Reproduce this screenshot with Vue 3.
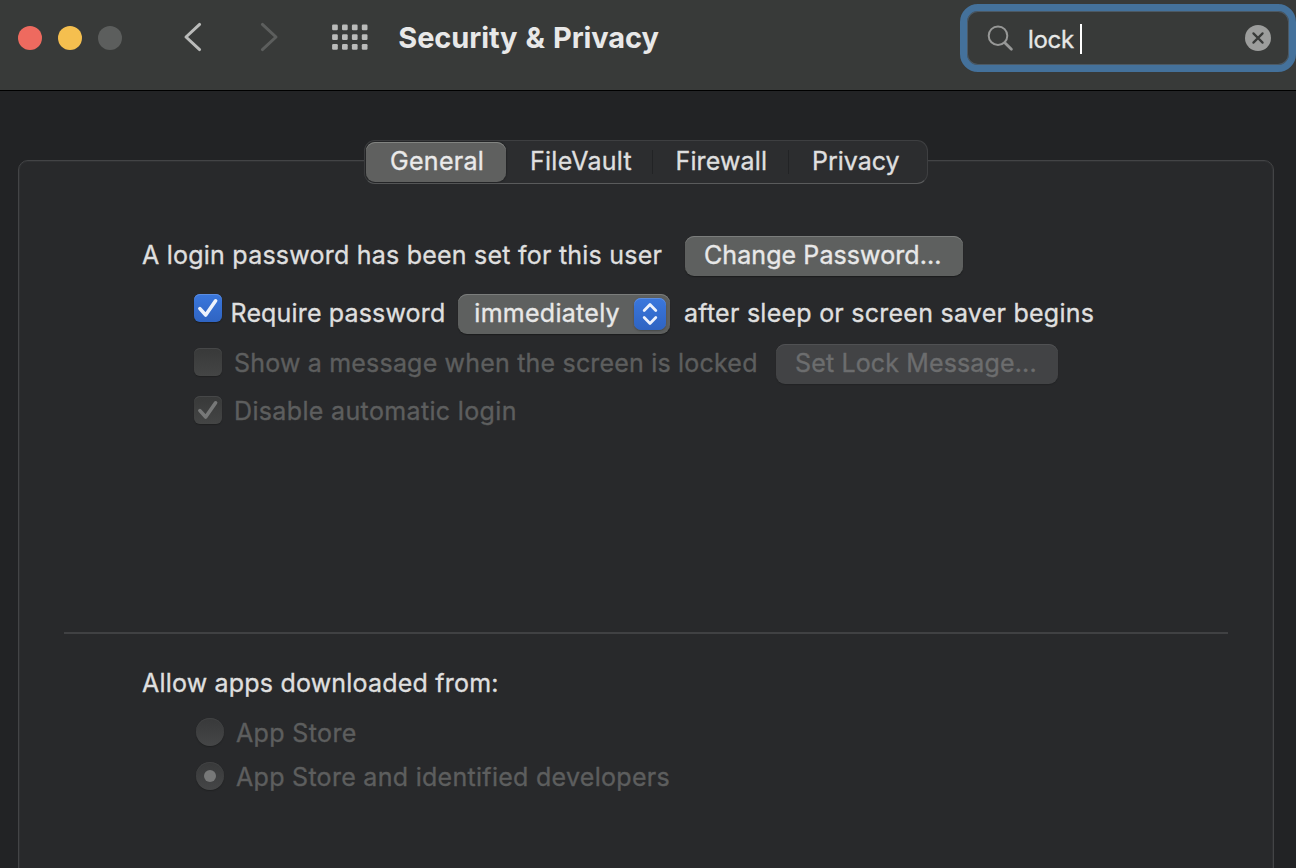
<script setup>
import { ref } from 'vue'

const query = ref('lock')
const dots = [0, 1, 2].flatMap(r => [0, 1, 2, 3].map(c => ({ x: c * 9.9, y: r * 9.8 })))
</script>

<template>
  <div class="window">
    <header class="toolbar">
      <div class="lights">
        <span class="light close"></span>
        <span class="light minimize"></span>
        <span class="light zoom"></span>
      </div>
      <svg class="nav back" width="20" height="32" viewBox="0 0 20 32">
        <path d="M16.600 3.400 3 16l13.600 12.600" />
      </svg>
      <svg class="nav forward" width="20" height="32" viewBox="0 0 20 32">
        <path d="M3.400 3.400 17 16 3.400 28.600" />
      </svg>
      <svg class="grid" width="36" height="26" viewBox="0 0 36 26">
        <rect v-for="(d, i) in dots" :key="i" :x="d.x + 0.1" :y="d.y + 0.5" width="5.700" height="5.700" rx="1.200" />
      </svg>
      <h1 class="title">Security &amp; Privacy</h1>
      <div class="search">
        <svg class="glass" width="28" height="28" viewBox="0 0 28 28">
          <circle cx="12" cy="11.700" r="9.300" />
          <path d="M18.800 18.700 25.400 25.300" />
        </svg>
        <span class="query">{{ query }}</span>
        <span class="caret"></span>
        <svg class="clear" width="26" height="26" viewBox="0 0 26 26">
          <circle cx="13" cy="13" r="13" />
          <path d="M8.400 8.400l9.200 9.200M17.600 8.400l-9.200 9.200" />
        </svg>
      </div>
    </header>

    <main class="content">
      <nav class="tabs">
        <span class="tab general active">General</span>
        <span class="tab filevault">FileVault</span>
        <i class="sep"></i>
        <span class="tab firewall">Firewall</span>
        <i class="sep"></i>
        <span class="tab privacy">Privacy</span>
      </nav>

      <section class="panel">
        <div class="row login">
          <span class="text t-login">A login password has been set for this user</span>
          <button class="button change">Change Password...</button>
        </div>
        <div class="row require">
          <span class="check on">
            <svg width="28" height="28" viewBox="0 0 28 28"><path d="M5.900 14.600 11.700 21 21.600 6.800" /></svg>
          </span>
          <span class="text t-require">Require password</span>
          <span class="select">
            <span class="value">immediately</span>
            <span class="stepper">
              <svg width="32" height="32" viewBox="0 0 32 32">
                <path d="M10.200 12.400 16 6.600l5.800 5.800M10.200 19.600 16 25.400l5.800-5.800" />
              </svg>
            </span>
          </span>
          <span class="text t-after">after sleep or screen saver begins</span>
        </div>
        <div class="row message disabled">
          <span class="check"></span>
          <span class="text t-show">Show a message when the screen is locked</span>
          <button class="button lockmsg" disabled>Set Lock Message...</button>
        </div>
        <div class="row auto disabled">
          <span class="check">
            <svg width="28" height="28" viewBox="0 0 28 28"><path d="M5.900 14.600 11.700 21 21.600 6.800" /></svg>
          </span>
          <span class="text t-auto">Disable automatic login</span>
        </div>

        <hr class="divider" />

        <div class="row allow"><span class="text t-allow">Allow apps downloaded from:</span></div>
        <div class="row store disabled">
          <span class="radio"></span>
          <span class="text t-store">App Store</span>
        </div>
        <div class="row devs disabled">
          <span class="radio selected"></span>
          <span class="text t-devs">App Store and identified developers</span>
        </div>
      </section>
    </main>
  </div>
</template>

<style>
body { background: #222325; }
</style>

<style scoped>
.window {
  width: 1296px;
  height: 868px;
  overflow: hidden;
  background: #222325;
  color: #dfdfdf;
  font-family: Inter, "Liberation Sans", sans-serif;
  font-size: 25px;
  white-space: nowrap;
  -webkit-text-stroke: 0.350px currentColor;
}
.window * { box-sizing: border-box; }

.toolbar {
  display: flex;
  align-items: flex-start;
  height: 91px;
  background: #383a39;
  border-bottom: 1px solid #000;
}
.lights { display: flex; gap: 16px; padding: 26px 0 0 18px; }
.light { width: 24px; height: 24px; border-radius: 50%; }
.close { background: #ee6a5f; }
.minimize { background: #f5bf4f; }
.zoom { background: #5c5e5d; }
.nav { flex: none; margin-top: 21px; fill: none; stroke-width: 3; stroke-linecap: round; stroke-linejoin: round; }
.back { margin-left: 61px; stroke: #babbba; }
.forward { margin-left: 56px; stroke: #5c5e5d; }
.grid { flex: none; margin: 24px 0 0 53px; fill: #babbba; }
.title {
  width: 562px;
  margin: 19px 0 0;
  padding-left: 30.300px;
  font-size: 29px;
  line-height: 37px;
  font-weight: 700;
  letter-spacing: -0.100px;
  word-spacing: 1.300px;
  color: #e8e8e8;
  -webkit-text-stroke-width: 0;
}
.search {
  display: flex;
  flex: none;
  width: 336px;
  height: 68px;
  margin: 4px 0 0 30px;
  border: 7px solid #44719b;
  border-radius: 18px;
  box-shadow: inset 0 0 0 1px #4c5964;
}
.glass { margin: 13px 0 0 19px; fill: none; stroke: #979897; stroke-width: 2; stroke-linecap: round; }
.glass path { stroke-width: 2.800; }
.query {
  width: 52px;
  margin: 10px 0 0 14px;
  font-size: 24px;
  line-height: 37px;
  letter-spacing: -0.300px;
  color: #e6e7e6;
}
.caret { width: 2px; height: 30px; margin-top: 13px; background: #fff; }
.clear { margin: 14px 0 0 163px; fill: #9c9d9c; }
.clear path { fill: none; stroke: #383a39; stroke-width: 2.200; stroke-linecap: round; }

.content { display: flex; flex-direction: column; align-items: center; padding-top: 49px; }
.tabs {
  position: relative;
  z-index: 1;
  display: flex;
  width: 564px;
  height: 44px;
  margin-right: 4px;
  padding: 1px;
  border: 1px solid #3e3f41;
  border-bottom-color: #5a5b5c;
  border-radius: 11px;
  background: #2c2d2f;
}
.tab { height: 40px; line-height: 38px; color: #dfdfdf; }
.general { width: 140px; padding-left: 24px; letter-spacing: 0.300px; }
.active { background: #5f605f; border-radius: 9px; box-shadow: inset 0 1px #828481, 0 0 1px 1px #242527; color: #eaeaea; }
.filevault { width: 146px; padding-left: 24px; letter-spacing: 0.260px; }
.firewall { width: 135px; padding-left: 22.500px; letter-spacing: 0.140px; }
.privacy { padding-left: 23px; }
.sep { width: 1px; height: 24px; margin-top: 8px; background: #222325; }

.panel {
  width: 1256px;
  height: 740px;
  margin: -24px 4px 0 0;
  padding: 75px 0 0;
  border: 1px solid #434446;
  border-radius: 10px;
  box-shadow: inset 0 0 0 1px #2f3032;
  background: #28292b;
}
.row { display: flex; align-items: flex-start; }
.text { flex: none; line-height: 38px; }
.disabled { color: #5d5e5e; }
.login { height: 58px; padding-left: 123px; }
.t-login { width: 543px; letter-spacing: 0.230px; }
.require { height: 50px; padding-left: 175px; }
.t-require { width: 227.500px; letter-spacing: 0.160px; }
.message { height: 48px; padding-left: 175px; }
.auto { height: 40px; padding-left: 175px; }
.t-after { margin-left: 14px; letter-spacing: 0.250px; }
.t-show { width: 542px; letter-spacing: 0.190px; }
.t-auto { letter-spacing: 0.350px; }

.button {
  height: 40px;
  padding: 0 0 2px;
  border: 0;
  border-radius: 9px;
  background: #5e605f;
  box-shadow: inset 0 1px #7b7d7c, 0 1px 1px #1b1c1d;
  color: #e8e8e8;
  font: inherit;
  line-height: 38px;
  text-align: left;
}
.change { width: 278px; padding-left: 19px; letter-spacing: 0.080px; }
.lockmsg {
  width: 282px;
  padding-left: 19px;
  letter-spacing: 0.140px;
  background: #424345;
  box-shadow: inset 0 1px #505153, 0 1px 1px #222325;
  color: #6c6d6e;
}

.check {
  flex: none;
  width: 28px;
  height: 28px;
  border-radius: 6px;
  background: linear-gradient(#383939, #444545);
  box-shadow: inset 0 1px #464748, 0 1px 1px #202122;
}
.disabled .check { margin: 4px 12px 0 0; }
.check svg { display: block; fill: none; stroke: #777878; stroke-width: 3.600; stroke-linecap: round; stroke-linejoin: round; }
.on { margin-right: 8.500px; background: linear-gradient(#3a77dd, #2f64c2); box-shadow: inset 0 1px #5b8de2, 0 1px 1px #1c1d1f; }
.on svg { stroke: #edf2fc; }

.select {
  display: flex;
  flex: none;
  width: 212px;
  height: 40px;
  border-radius: 9px;
  background: #5e605f;
  box-shadow: inset 0 1px #7b7d7c, 0 1px 1px #1b1c1d;
}
.value { width: 176px; padding-left: 16.300px; line-height: 38px; letter-spacing: 0.280px; color: #e8e8e8; }
.stepper {
  width: 32px;
  height: 32px;
  margin-top: 4px;
  border-radius: 7px;
  background: linear-gradient(#3a77dd, #2f64c2);
  box-shadow: inset 0 1px #5b8de2, 0 1px 2px #454746;
}
.stepper svg { display: block; fill: none; stroke: #edf2fc; stroke-width: 2.800; stroke-linecap: round; stroke-linejoin: round; }

.divider { width: 1164px; height: 2px; margin: 200px 0 30px 45px; border: 0; background: #404143; }

.allow { height: 50px; padding-left: 123px; }
.t-allow { letter-spacing: 0.200px; }
.store, .devs { height: 44px; padding-left: 177px; }
.radio {
  display: flex;
  align-items: center;
  justify-content: center;
  width: 28px;
  height: 28px;
  margin: 4px 12px 0 0;
  border-radius: 50%;
  background: linear-gradient(#38393a, #454647);
  box-shadow: inset 0 1px #414243, 0 1px 1px #202122;
}
.selected::after { content: ""; width: 12px; height: 12px; border-radius: 50%; background: #777878; }
.t-store { letter-spacing: 0.360px; }
.t-devs { letter-spacing: 0.290px; }
</style>
